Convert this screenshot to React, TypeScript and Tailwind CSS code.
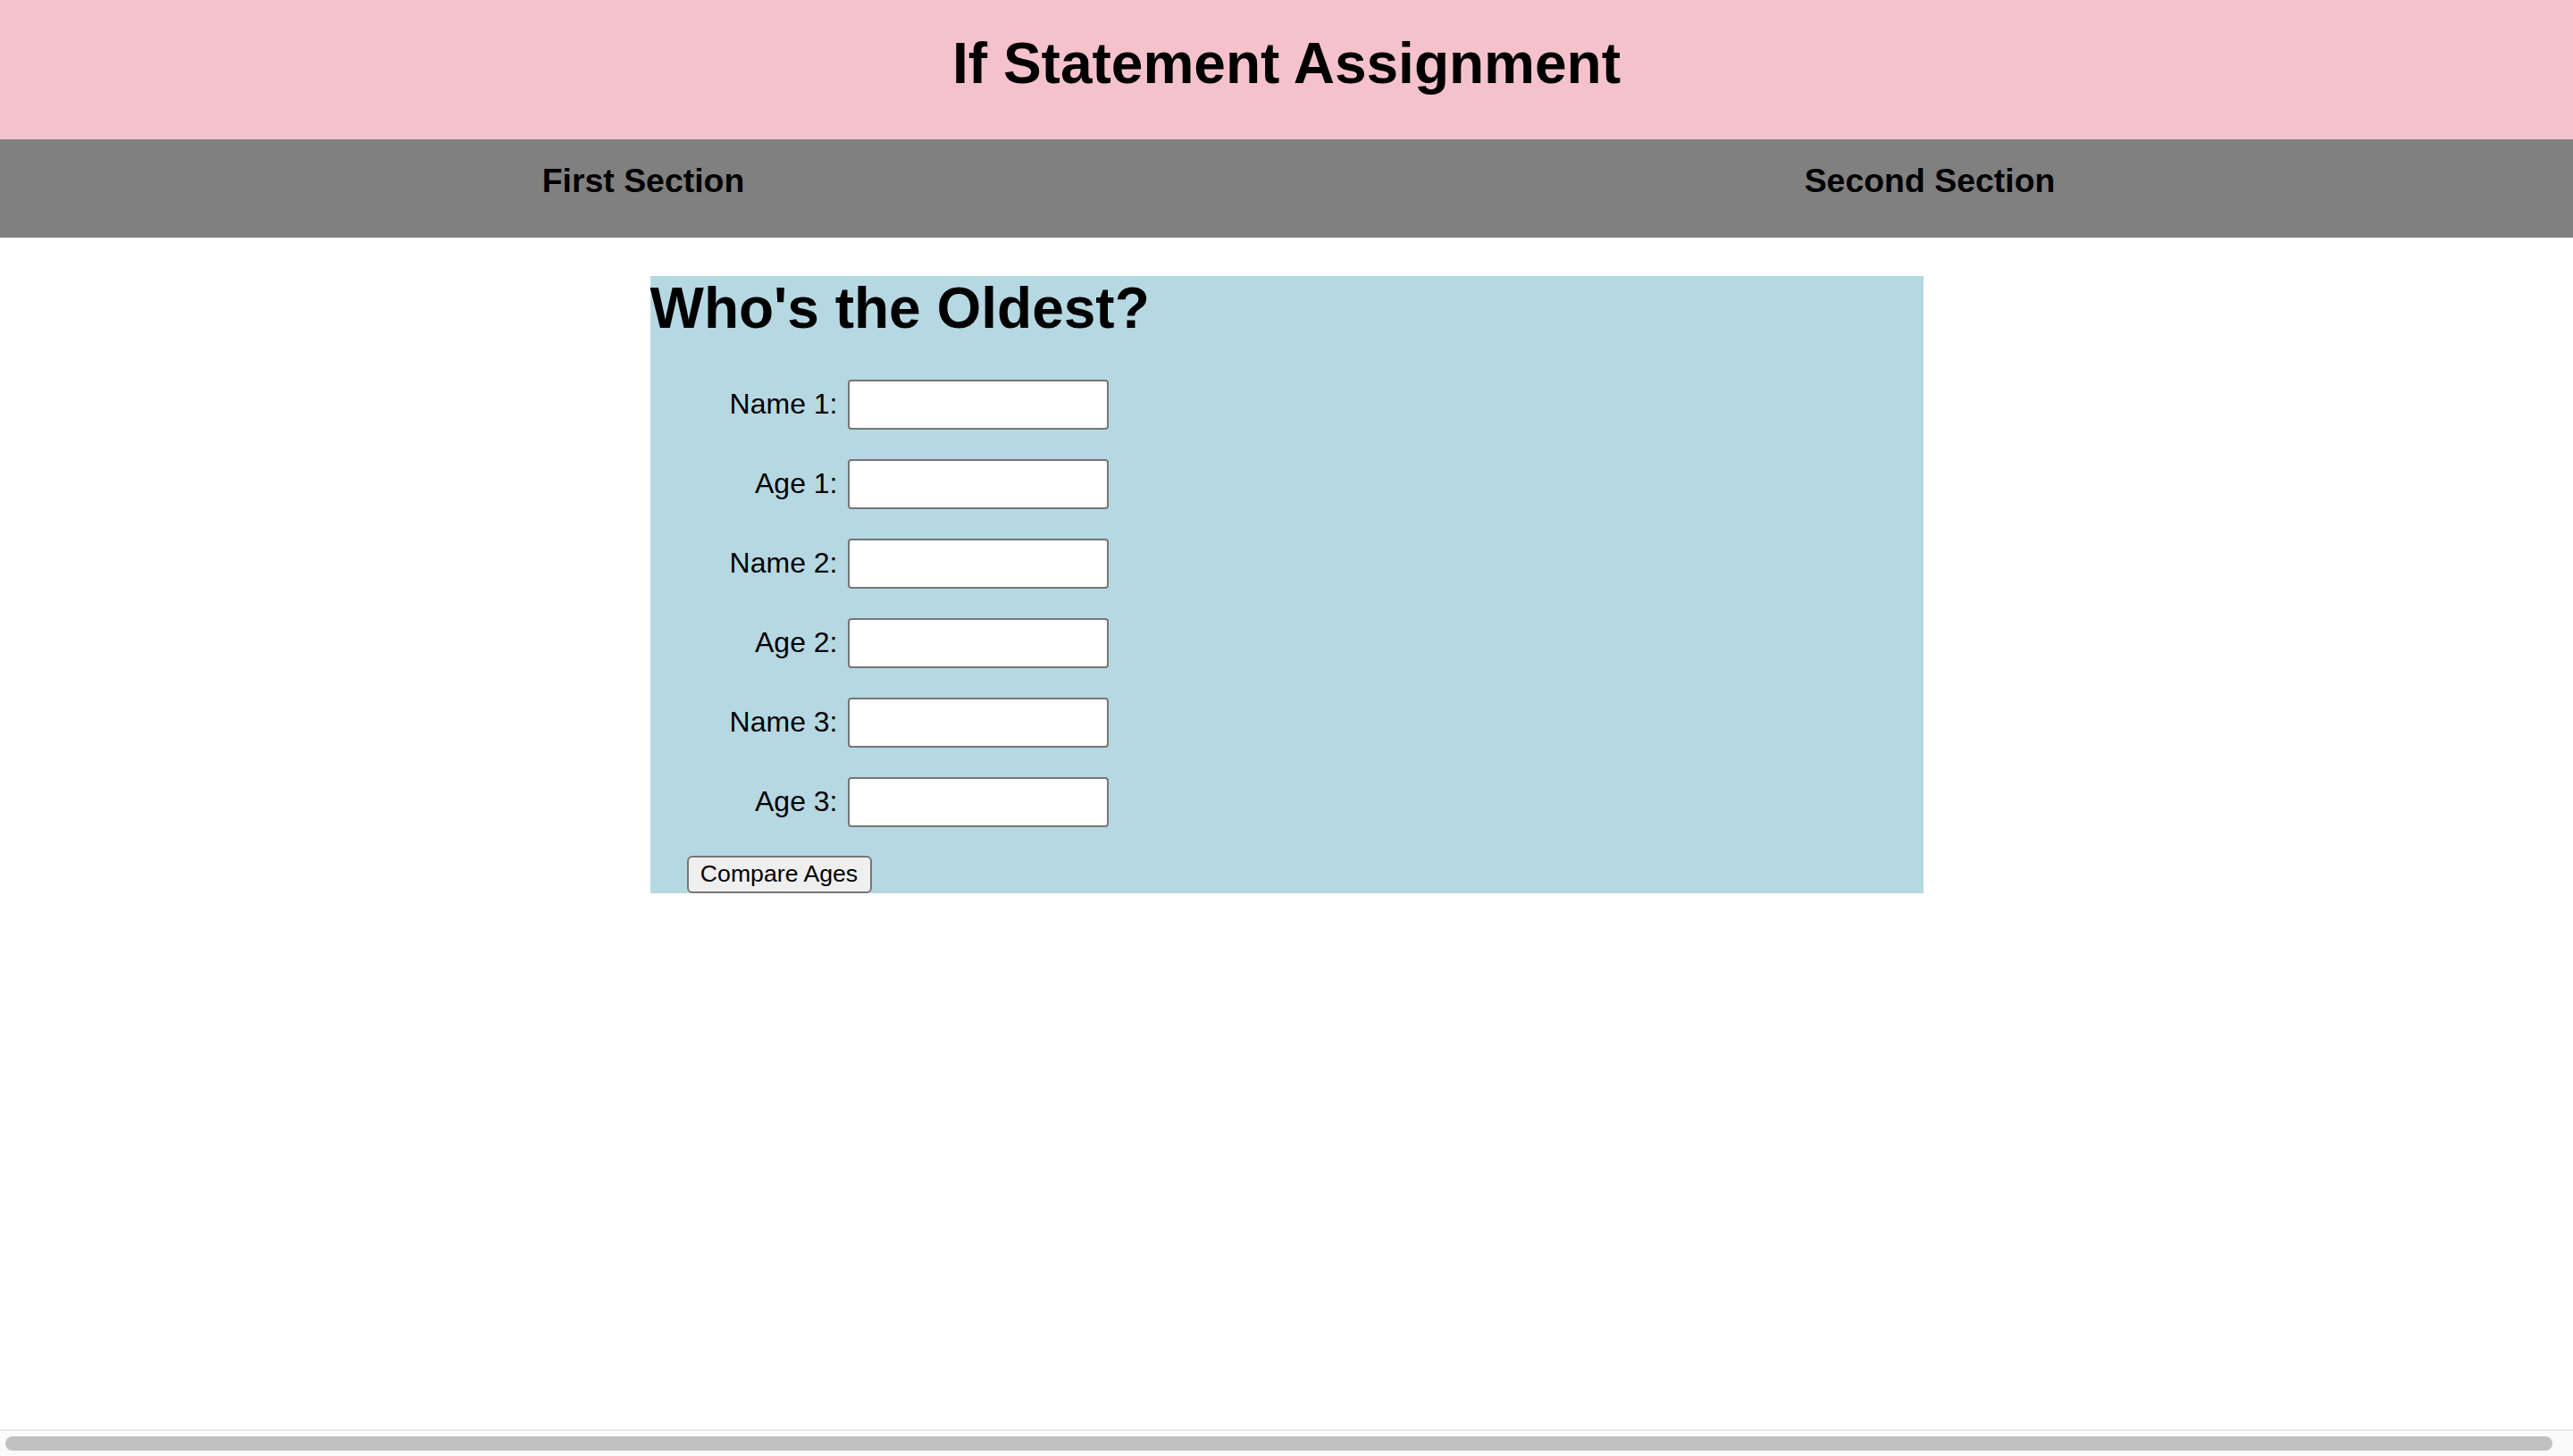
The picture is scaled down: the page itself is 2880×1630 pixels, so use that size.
import React from "react";

const rows = ["Name 1:", "Age 1:", "Name 2:", "Age 2:", "Name 3:", "Age 3:"];

export default function App() {
  return (
    <div className="min-h-screen bg-white font-['Liberation_Sans',Arial,sans-serif] text-black">
      <header className="h-[156px] bg-[#f5c2cb] pt-[35px] text-center">
        <h1 className="m-0 text-[64px] font-bold leading-[73.6px]">If Statement Assignment</h1>
      </header>
      <nav className="flex h-[110px] bg-[#808080] pt-[25px]">
        <div className="flex-1 text-center text-[37.44px] font-bold leading-[43px]">First Section</div>
        <div className="flex-1 text-center text-[37.44px] font-bold leading-[43px]">Second Section</div>
      </nav>
      <main className="mx-auto mt-[43px] w-[1425px] bg-[#b6d8e3]">
        <h2 className="m-0 text-[64px] font-bold leading-[73.6px]">Who's the Oldest?</h2>
        <div className="mt-[42px] flex flex-col gap-[33px]">
          {rows.map((r) => (
            <div key={r} className="flex items-center">
              <label className="w-[210px] text-right text-[32px] leading-[37px]">{r}</label>
              <input
                type="text"
                className="ml-[11px] h-[56px] w-[292px] rounded-[4px] border-2 border-[#767676] bg-white px-2 text-[26px] outline-none"
              />
            </div>
          ))}
        </div>
        <div className="mt-[32px] pl-[41px]">
          <button className="h-[42px] w-[207px] rounded-[6px] border-2 border-[#767676] bg-[#efefef] text-[26.67px] leading-none text-black">
            Compare Ages
          </button>
        </div>
      </main>
      <div className="fixed bottom-0 left-0 right-0 h-[30px] border-t-2 border-[#e8e8e8] bg-[#fafafa] pt-[6px]">
        <div className="ml-[6px] h-[16px] w-[2851px] rounded-full bg-[#c1c1c1]" />
      </div>
    </div>
  );
}
